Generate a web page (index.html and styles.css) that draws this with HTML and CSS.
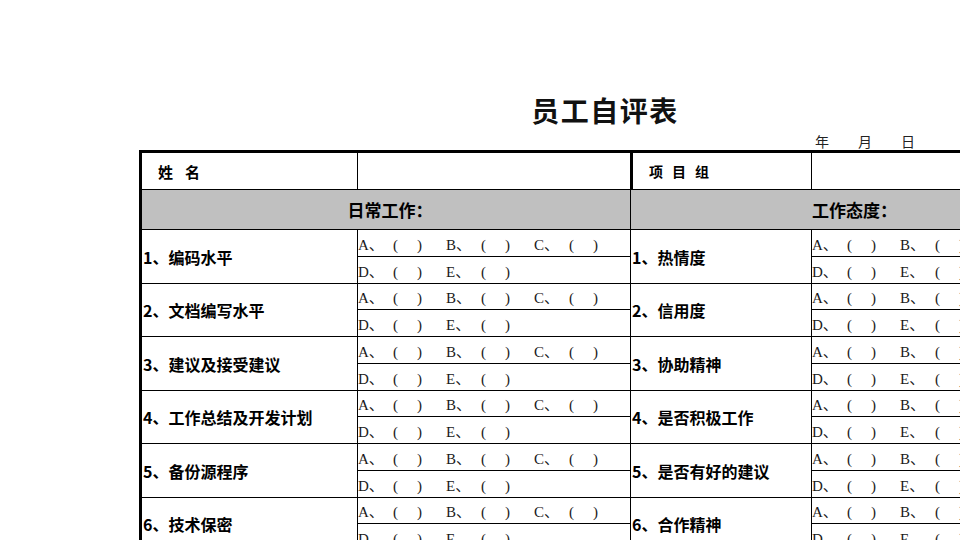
FILE: index.html
```html
<!DOCTYPE html>
<html lang="zh-CN">
<head>
<meta charset="utf-8">
<title>员工自评表</title>
<link rel="stylesheet" href="styles.css">
</head>
<body>
<div class="page">
  <h1 class="title">员工自评表</h1>
  <div class="date"><span>年</span><span>月</span><span>日</span></div>
  <table class="sheet">
    <colgroup><col class="c1"><col class="c2"><col class="c3"><col class="c4"></colgroup>
    <tr class="r-head">
      <td class="hd name">姓名</td><td></td><td class="hd grp thick">项目组</td><td></td>
    </tr>
    <tr class="r-sec">
      <td colspan="2" class="sec">日常工作：</td><td colspan="2" class="sec">工作态度：</td>
    </tr>
    <tr class="ra h27">
      <td rowspan="2" class="item">1、编码水平</td>
      <td class="opts"><span class="o"><span class="k">A、</span><span class="p">(</span><span>)</span></span><span class="o"><span class="k">B、</span><span class="p">(</span><span>)</span></span><span class="o"><span class="k">C、</span><span class="p">(</span><span>)</span></span></td>
      <td rowspan="2" class="item">1、热情度</td>
      <td class="opts"><span class="o"><span class="k">A、</span><span class="p">(</span><span>)</span></span><span class="o"><span class="k">B、</span><span class="p">(</span><span>)</span></span><span class="o"><span class="k">C、</span><span class="p">(</span><span>)</span></span></td>
    </tr>
    <tr class="rb h27">
      <td class="opts"><span class="o"><span class="k">D、</span><span class="p">(</span><span>)</span></span><span class="o"><span class="k">E、</span><span class="p">(</span><span>)</span></span></td>
      <td class="opts"><span class="o"><span class="k">D、</span><span class="p">(</span><span>)</span></span><span class="o"><span class="k">E、</span><span class="p">(</span><span>)</span></span></td>
    </tr>
    <tr class="ra h26">
      <td rowspan="2" class="item">2、文档编写水平</td>
      <td class="opts"><span class="o"><span class="k">A、</span><span class="p">(</span><span>)</span></span><span class="o"><span class="k">B、</span><span class="p">(</span><span>)</span></span><span class="o"><span class="k">C、</span><span class="p">(</span><span>)</span></span></td>
      <td rowspan="2" class="item">2、信用度</td>
      <td class="opts"><span class="o"><span class="k">A、</span><span class="p">(</span><span>)</span></span><span class="o"><span class="k">B、</span><span class="p">(</span><span>)</span></span><span class="o"><span class="k">C、</span><span class="p">(</span><span>)</span></span></td>
    </tr>
    <tr class="rb h27">
      <td class="opts"><span class="o"><span class="k">D、</span><span class="p">(</span><span>)</span></span><span class="o"><span class="k">E、</span><span class="p">(</span><span>)</span></span></td>
      <td class="opts"><span class="o"><span class="k">D、</span><span class="p">(</span><span>)</span></span><span class="o"><span class="k">E、</span><span class="p">(</span><span>)</span></span></td>
    </tr>
    <tr class="ra h27">
      <td rowspan="2" class="item">3、建议及接受建议</td>
      <td class="opts"><span class="o"><span class="k">A、</span><span class="p">(</span><span>)</span></span><span class="o"><span class="k">B、</span><span class="p">(</span><span>)</span></span><span class="o"><span class="k">C、</span><span class="p">(</span><span>)</span></span></td>
      <td rowspan="2" class="item">3、协助精神</td>
      <td class="opts"><span class="o"><span class="k">A、</span><span class="p">(</span><span>)</span></span><span class="o"><span class="k">B、</span><span class="p">(</span><span>)</span></span><span class="o"><span class="k">C、</span><span class="p">(</span><span>)</span></span></td>
    </tr>
    <tr class="rb h27">
      <td class="opts"><span class="o"><span class="k">D、</span><span class="p">(</span><span>)</span></span><span class="o"><span class="k">E、</span><span class="p">(</span><span>)</span></span></td>
      <td class="opts"><span class="o"><span class="k">D、</span><span class="p">(</span><span>)</span></span><span class="o"><span class="k">E、</span><span class="p">(</span><span>)</span></span></td>
    </tr>
    <tr class="ra h26">
      <td rowspan="2" class="item">4、工作总结及开发计划</td>
      <td class="opts"><span class="o"><span class="k">A、</span><span class="p">(</span><span>)</span></span><span class="o"><span class="k">B、</span><span class="p">(</span><span>)</span></span><span class="o"><span class="k">C、</span><span class="p">(</span><span>)</span></span></td>
      <td rowspan="2" class="item">4、是否积极工作</td>
      <td class="opts"><span class="o"><span class="k">A、</span><span class="p">(</span><span>)</span></span><span class="o"><span class="k">B、</span><span class="p">(</span><span>)</span></span><span class="o"><span class="k">C、</span><span class="p">(</span><span>)</span></span></td>
    </tr>
    <tr class="rb h27">
      <td class="opts"><span class="o"><span class="k">D、</span><span class="p">(</span><span>)</span></span><span class="o"><span class="k">E、</span><span class="p">(</span><span>)</span></span></td>
      <td class="opts"><span class="o"><span class="k">D、</span><span class="p">(</span><span>)</span></span><span class="o"><span class="k">E、</span><span class="p">(</span><span>)</span></span></td>
    </tr>
    <tr class="ra h27">
      <td rowspan="2" class="item">5、备份源程序</td>
      <td class="opts"><span class="o"><span class="k">A、</span><span class="p">(</span><span>)</span></span><span class="o"><span class="k">B、</span><span class="p">(</span><span>)</span></span><span class="o"><span class="k">C、</span><span class="p">(</span><span>)</span></span></td>
      <td rowspan="2" class="item">5、是否有好的建议</td>
      <td class="opts"><span class="o"><span class="k">A、</span><span class="p">(</span><span>)</span></span><span class="o"><span class="k">B、</span><span class="p">(</span><span>)</span></span><span class="o"><span class="k">C、</span><span class="p">(</span><span>)</span></span></td>
    </tr>
    <tr class="rb h27">
      <td class="opts"><span class="o"><span class="k">D、</span><span class="p">(</span><span>)</span></span><span class="o"><span class="k">E、</span><span class="p">(</span><span>)</span></span></td>
      <td class="opts"><span class="o"><span class="k">D、</span><span class="p">(</span><span>)</span></span><span class="o"><span class="k">E、</span><span class="p">(</span><span>)</span></span></td>
    </tr>
    <tr class="ra h26">
      <td rowspan="2" class="item">6、技术保密</td>
      <td class="opts"><span class="o"><span class="k">A、</span><span class="p">(</span><span>)</span></span><span class="o"><span class="k">B、</span><span class="p">(</span><span>)</span></span><span class="o"><span class="k">C、</span><span class="p">(</span><span>)</span></span></td>
      <td rowspan="2" class="item">6、合作精神</td>
      <td class="opts"><span class="o"><span class="k">A、</span><span class="p">(</span><span>)</span></span><span class="o"><span class="k">B、</span><span class="p">(</span><span>)</span></span><span class="o"><span class="k">C、</span><span class="p">(</span><span>)</span></span></td>
    </tr>
    <tr class="rb h27">
      <td class="opts"><span class="o"><span class="k">D、</span><span class="p">(</span><span>)</span></span><span class="o"><span class="k">E、</span><span class="p">(</span><span>)</span></span></td>
      <td class="opts"><span class="o"><span class="k">D、</span><span class="p">(</span><span>)</span></span><span class="o"><span class="k">E、</span><span class="p">(</span><span>)</span></span></td>
    </tr>
  </table>
</div>
</body>
</html>
```

FILE: styles.css
```css
html, body {
  margin: 0;
  padding: 0;
  width: 960px;
  height: 540px;
  overflow: hidden;
  background: #ffffff;
}

body {
  font-family: "Noto Sans CJK SC", "Liberation Sans", sans-serif;
  color: #000;
}

.page {
  padding-left: 139px;
  padding-top: 90px;
  width: 940px;
}

.title {
  margin: 0;
  width: 932px;
  height: 40px;
  line-height: 40px;
  text-align: center;
  font-size: 28px;
  font-weight: 700;
  letter-spacing: 1.5px;
  color: #111;
}

.date {
  margin-top: 2px;
  height: 18px;
  line-height: 18px;
  padding-left: 676px;
  font-size: 14px;
  color: #222;
  display: flex;
  gap: 29px;
}

.sheet {
  border-collapse: separate;
  border-spacing: 0;
  table-layout: fixed;
  width: 932px;
  border-top: 3px solid #000;
  border-left: 3px solid #000;
}

.c1 { width: 216px; }
.c2 { width: 273px; }
.c3 { width: 181px; }
.c4 { width: 259px; }

.sheet td {
  box-sizing: border-box;
  border-right: 1px solid #000;
  border-bottom: 1px solid #000;
  padding: 0;
  vertical-align: middle;
  white-space: nowrap;
  overflow: hidden;
}

.r-head { height: 37px; }
.r-sec { height: 40px; }
.h27 { height: 27px; }
.h26 { height: 26px; }

.hd {
  font-weight: 700;
  font-size: 15px;
}

.name {
  padding-left: 16px !important;
  letter-spacing: 12px;
}

.grp {
  padding-left: 16px !important;
  font-size: 14px;
  letter-spacing: 9px;
}

.sheet td.thick {
  border-left: 2px solid #000;
}

.sec {
  background: #c0c0c0;
  text-align: center;
  font-weight: 700;
  font-size: 17px;
  padding-left: 8px !important;
}

.item {
  font-weight: 700;
  font-size: 16px;
  padding-left: 1px !important;
}

.opts {
  padding-left: 0 !important;
  font-family: "Liberation Serif", "Noto Sans CJK SC", serif;
  font-size: 15px;
  color: #1a1a1a;
}

.o {
  display: inline-block;
  width: 88px;
}

.k {
  display: inline-block;
  width: 35px;
}

.p {
  display: inline-block;
  width: 24px;
}
```
